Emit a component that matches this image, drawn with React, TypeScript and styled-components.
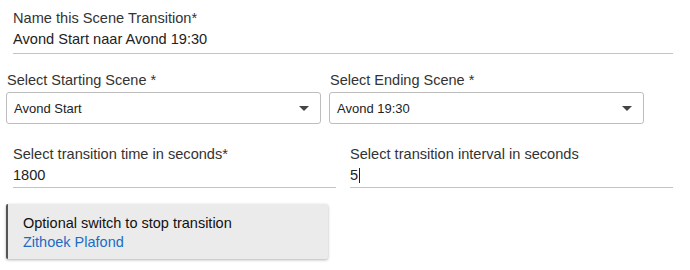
import React from "react";
import styled, { createGlobalStyle } from "styled-components";

const Global = createGlobalStyle`
  html, body { margin: 0; padding: 0; background: #fff; }
  body { font-family: "Liberation Sans", Arial, sans-serif; color: #222; }
`;

const Page = styled.div`
  width: 690px;
  height: 270px;
  box-sizing: border-box;
  padding: 8px 6px 0 6px;
  display: flex;
  flex-direction: column;
`;

const TextField = styled.div<{ $ml: number; $mr: number; $pb: number }>`
  margin: 0 ${(p) => p.$mr}px 0 ${(p) => p.$ml}px;
  display: flex;
  flex-direction: column;
  border-bottom: 1px solid #c4c4c4;
  padding-bottom: ${(p) => p.$pb}px;
`;

const FieldLabel = styled.div`
  font-size: 14.6px;
  line-height: 21px;
  color: #333;
`;

const FieldValue = styled.div`
  font-size: 14.6px;
  line-height: 21px;
  color: #222;
  display: flex;
  align-items: center;
`;

const Caret = styled.span`
  display: inline-block;
  width: 1px;
  height: 15px;
  background: #222;
  margin-left: 1px;
`;

const SelectRow = styled.div`
  display: grid;
  grid-template-columns: 315px 315px;
  column-gap: 8px;
  margin-top: 16px;
`;

const SelectField = styled.div`
  display: flex;
  flex-direction: column;
`;

const SelectLabel = styled.div`
  font-size: 14.5px;
  line-height: 20px;
  color: #333;
  padding-left: 1px;
  margin-bottom: 2px;
`;

const SelectBox = styled.div`
  height: 32px;
  box-sizing: border-box;
  border: 1px solid #bdbdbd;
  border-radius: 3px;
  display: flex;
  align-items: center;
  justify-content: space-between;
  padding: 0 11px 0 7px;
  font-size: 13px;
  color: #222;
`;

const Arrow = styled.span`
  width: 0;
  height: 0;
  border-left: 5px solid transparent;
  border-right: 5px solid transparent;
  border-top: 5px solid #444;
`;

const FieldRow = styled.div`
  display: grid;
  grid-template-columns: 323px 323px;
  column-gap: 14px;
  margin: 20px 0 0 7px;
`;

const Card = styled.div`
  margin-top: 16px;
  width: 322px;
  height: 55px;
  box-sizing: border-box;
  background: #ebebeb;
  border-left: 2px solid #555;
  border-radius: 2px;
  box-shadow: 0 1px 3px rgba(0, 0, 0, 0.3);
  padding: 10px 0 0 15px;
  display: flex;
  flex-direction: column;
`;

const CardTitle = styled.div`
  font-size: 14.5px;
  line-height: 19px;
  color: #111;
`;

const CardLink = styled.a`
  font-size: 14.5px;
  line-height: 19px;
  color: #1c6bc4;
  text-decoration: none;
`;

export default function App() {
  return (
    <>
      <Global />
      <Page>
        <TextField $ml={7} $mr={11} $pb={3}>
          <FieldLabel>Name this Scene Transition*</FieldLabel>
          <FieldValue>Avond Start naar Avond 19:30</FieldValue>
        </TextField>
        <SelectRow>
          <SelectField>
            <SelectLabel>Select Starting Scene *</SelectLabel>
            <SelectBox>
              <span>Avond Start</span>
              <Arrow />
            </SelectBox>
          </SelectField>
          <SelectField>
            <SelectLabel>Select Ending Scene *</SelectLabel>
            <SelectBox>
              <span>Avond 19:30</span>
              <Arrow />
            </SelectBox>
          </SelectField>
        </SelectRow>
        <FieldRow>
          <TextField $ml={0} $mr={0} $pb={1}>
            <FieldLabel>Select transition time in seconds*</FieldLabel>
            <FieldValue>1800</FieldValue>
          </TextField>
          <TextField $ml={0} $mr={0} $pb={1}>
            <FieldLabel>Select transition interval in seconds</FieldLabel>
            <FieldValue>
              5<Caret />
            </FieldValue>
          </TextField>
        </FieldRow>
        <Card>
          <CardTitle>Optional switch to stop transition</CardTitle>
          <CardLink href="#">Zithoek Plafond</CardLink>
        </Card>
      </Page>
    </>
  );
}
